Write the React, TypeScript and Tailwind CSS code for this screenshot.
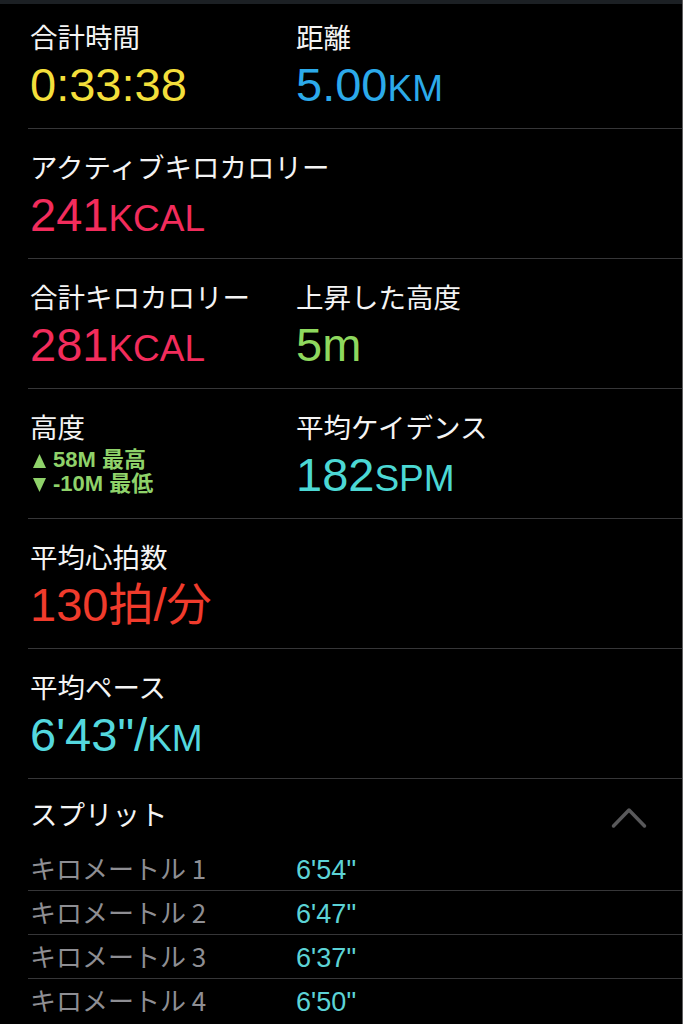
import { FC, ReactNode } from "react";

type Metric = {
  label: string;
  value: ReactNode;
};

const Label: FC<{ children: ReactNode }> = ({ children }) => (
  <div className="whitespace-nowrap font-['Noto_Sans_CJK_JP',sans-serif] text-[27.5px] leading-[30px] text-[#f4f4f4]">
    {children}
  </div>
);

const Value: FC<{ color: string; children: ReactNode }> = ({ color, children }) => (
  <div
    className={`mt-[10px] whitespace-nowrap font-['Liberation_Sans','Noto_Sans_CJK_JP',sans-serif] text-[47px] leading-none ${color}`}
  >
    {children}
  </div>
);

const Unit: FC<{ children: ReactNode }> = ({ children }) => (
  <span className="text-[37px]">{children}</span>
);

const Kanji: FC<{ children: ReactNode }> = ({ children }) => (
  <span className="inline-block font-['Noto_Sans_CJK_JP',sans-serif] text-[45px] leading-[40px]">
    {children}
  </span>
);

const MetricCell: FC<Metric> = ({ label, value }) => (
  <div>
    <Label>{label}</Label>
    {value}
  </div>
);

const Row: FC<{ first?: boolean; children: ReactNode }> = ({ first, children }) => (
  <div
    className={
      first
        ? "ml-[28px] grid h-[125px] grid-cols-[266px_1fr] border-b border-[#363638] pl-[2px] pt-[17px]"
        : "ml-[28px] grid h-[130px] grid-cols-[266px_1fr] border-b border-[#363638] pl-[2px] pt-[22px]"
    }
  >
    {children}
  </div>
);

const Arrow: FC<{ down?: boolean }> = ({ down }) => (
  <svg className="ml-[3px] mr-[7px] inline-block" width="13" height="15" viewBox="0 0 13 15" fill="currentColor">
    <path d={down ? "M0 1 H13 L6.5 15 Z" : "M6.5 0 L13 14 H0 Z"} />
  </svg>
);

const splits = [
  { km: 1, pace: "6'54''" },
  { km: 2, pace: "6'47''" },
  { km: 3, pace: "6'37''" },
  { km: 4, pace: "6'50''" },
];

const App: FC = () => {
  return (
    <div className="h-[1024px] w-full overflow-hidden border-r border-[#5e5e60] bg-black">
      <div className="h-[4px] bg-[#1c2024]" />

      <Row first>
        <MetricCell
          label="合計時間"
          value={<Value color="text-[#f3df3b]">0:33:38</Value>}
        />
        <MetricCell
          label="距離"
          value={
            <Value color="text-[#2caaea]">
              5.00<Unit>KM</Unit>
            </Value>
          }
        />
      </Row>

      <Row>
        <MetricCell
          label="アクティブキロカロリー"
          value={
            <Value color="text-[#f22c5c]">
              241<Unit>KCAL</Unit>
            </Value>
          }
        />
      </Row>

      <Row>
        <MetricCell
          label="合計キロカロリー"
          value={
            <Value color="text-[#f22c5c]">
              281<Unit>KCAL</Unit>
            </Value>
          }
        />
        <MetricCell
          label="上昇した高度"
          value={<Value color="text-[#8ed85e]">5m</Value>}
        />
      </Row>

      <Row>
        <div>
          <Label>高度</Label>
          <div className="mt-[7px] font-['Liberation_Sans','Noto_Sans_CJK_JP',sans-serif] text-[22px] font-bold leading-[23.5px] text-[#8fd26a]">
            <div className="h-[23.5px]">
              <Arrow />
              58M{" "}
              <span className="inline-block font-['Noto_Sans_CJK_JP',sans-serif] leading-[16px]">最高</span>
            </div>
            <div className="h-[23.5px]">
              <Arrow down />
              -10M{" "}
              <span className="inline-block font-['Noto_Sans_CJK_JP',sans-serif] leading-[16px]">最低</span>
            </div>
          </div>
        </div>
        <MetricCell
          label="平均ケイデンス"
          value={
            <Value color="text-[#4cd8d4]">
              182<Unit>SPM</Unit>
            </Value>
          }
        />
      </Row>

      <Row>
        <MetricCell
          label="平均心拍数"
          value={
            <Value color="text-[#f03b2c]">
              130<Kanji>拍</Kanji>/<Kanji>分</Kanji>
            </Value>
          }
        />
      </Row>

      <Row>
        <MetricCell
          label="平均ペース"
          value={
            <Value color="text-[#54d8de]">
              6'43"/<Unit>KM</Unit>
            </Value>
          }
        />
      </Row>

      {/* splits */}
      <div className="ml-[28px] flex h-[68px] items-start justify-between pl-[2px] pt-[19px]">
        <Label>スプリット</Label>
        <svg
          className="mr-[35px] mt-[8px]"
          width="36"
          height="23"
          viewBox="0 0 36 23"
          fill="none"
          stroke="#59595b"
          strokeWidth="3.5"
          strokeLinecap="round"
          strokeLinejoin="round"
        >
          <path d="M2.5 20 L18 4 L33.5 20" />
        </svg>
      </div>

      {splits.map((s, i) => (
        <div
          key={s.km}
          className={
            i < splits.length - 1
              ? "ml-[28px] flex h-[44px] items-baseline border-b border-[#363638] pl-[2px] pt-[6px]"
              : "ml-[28px] flex h-[44px] items-baseline pl-[2px] pt-[6px]"
          }
        >
          <div className="w-[266px] font-['Noto_Sans_CJK_JP',sans-serif] text-[26px] leading-[30px] text-[#8e8e93]">
            キロメートル {s.km}
          </div>
          <div className="font-['Liberation_Sans',sans-serif] text-[27px] leading-[30px] text-[#5cd3d6]">
            {s.pace}
          </div>
        </div>
      ))}
    </div>
  );
};

export default App;
